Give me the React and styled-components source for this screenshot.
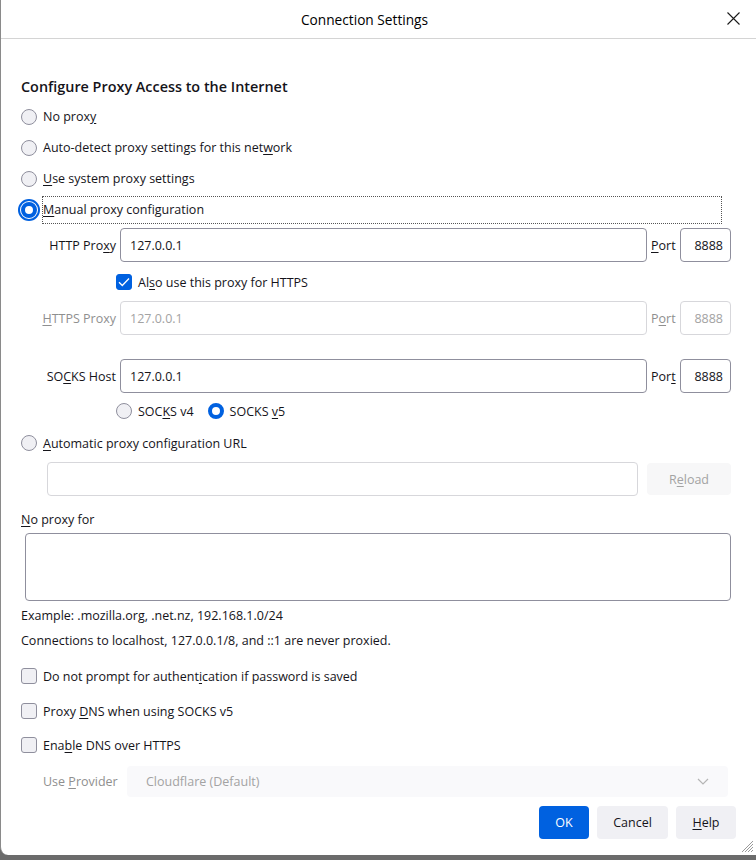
import React from "react";
import styled, { createGlobalStyle } from "styled-components";

const GlobalStyle = createGlobalStyle`
  html, body { margin: 0; padding: 0; background: #6b6b6b; }
  body { font-family: "Open Sans", "Noto Sans", sans-serif; color: #15141a; }
  #root { height: 860px; }
`;

const Window = styled.div`
  position: relative;
  box-sizing: border-box;
  width: 756px;
  height: 855px;
  background: #fff;
  border-left: 1px solid #8a8a8a;
  border-bottom-left-radius: 8px;
  display: flex;
  flex-direction: column;
  overflow: hidden;
`;

const TitleBar = styled.div`
  height: 38px;
  flex-shrink: 0;
  border-bottom: 1px solid #d4d4d4;
  display: flex;
  align-items: center;
  justify-content: center;
  padding-right: 28px;
  font-size: 13.7px;
  color: #000;
`;

const CloseButton = styled.span`
  position: absolute;
  right: 16px;
  top: 12px;
  width: 13px;
  height: 13px;
  display: flex;
`;

const Content = styled.div`
  display: flex;
  flex-direction: column;
  padding: 0 25px 0 20px;
`;

const Heading = styled.div`
  margin-top: 37px;
  height: 22px;
  line-height: 22px;
  font-size: 14.4px;
  font-weight: 600;
`;

const Row = styled.div`
  display: flex;
  align-items: center;
  height: ${(p) => p.$h}px;
  margin-top: ${(p) => p.$mt || 0}px;
  padding-left: ${(p) => p.$indent || 0}px;
  gap: ${(p) => (p.$gap != null ? p.$gap : 0)}px;
  font-size: 12.5px;
`;

const Radio = styled.span`
  flex-shrink: 0;
  box-sizing: border-box;
  width: 16px;
  height: 16px;
  border-radius: 50%;
  border: ${(p) => (p.$checked ? "4px solid #0061e0" : "1px solid #8f8f9d")};
  background: ${(p) => (p.$checked ? "#fff" : "#f0f0f4")};
  ${(p) => p.$focus && "outline: 2px solid #0061e0; outline-offset: 1px;"}
`;

const Check = styled.span`
  flex-shrink: 0;
  box-sizing: border-box;
  width: 16px;
  height: 16px;
  border-radius: 3px;
  border: 1px solid ${(p) => (p.$checked ? "#0061e0" : "#8f8f9d")};
  background: ${(p) => (p.$checked ? "#0061e0" : "#f0f0f4")};
  display: flex;
  align-items: center;
  justify-content: center;
`;

const ChoiceLabel = styled.span`
  margin-left: 6px;
  white-space: nowrap;
  color: ${(p) => (p.$disabled ? "#8f8f8f" : "#15141a")};
  ${(p) =>
    p.$focus &&
    `flex: 0 0 680px; box-sizing: border-box; height: 28px; display: flex; align-items: center;
     margin-left: 5px; border: 1px dotted #555;`}
`;

const FieldLabel = styled.span`
  width: ${(p) => p.$w}px;
  flex-shrink: 0;
  text-align: ${(p) => p.$align || "right"};
  white-space: nowrap;
  color: ${(p) => (p.$disabled ? "#8f8f8f" : "#15141a")};
`;

const TextBox = styled.div`
  box-sizing: border-box;
  height: 100%;
  flex: ${(p) => (p.$w ? `0 0 ${p.$w}px` : "1 1 auto")};
  border: 1px solid ${(p) => (p.$disabled ? "#d7d7db" : "#8f8f9d")};
  border-radius: 4px;
  display: flex;
  align-items: center;
  justify-content: ${(p) => (p.$right ? "flex-end" : "flex-start")};
  padding: 0 ${(p) => (p.$right ? 7 : 0)}px 0 ${(p) => (p.$right ? 0 : 9)}px;
  color: ${(p) => (p.$disabled ? "#a3a3a3" : "#15141a")};
  font-size: 12.5px;
`;

const U = styled.span`
  text-decoration: underline;
  text-underline-offset: 2px;
`;

const Para = styled.div`
  height: 20px;
  margin-top: ${(p) => p.$mt || 0}px;
  line-height: 20px;
  font-size: 12.5px;
  white-space: nowrap;
`;

const TextArea = styled.div`
  box-sizing: border-box;
  margin: 3px 0 0 4px;
  height: 68px;
  border: 1px solid #8f8f9d;
  border-radius: 4px;
`;

const FlatButton = styled.span`
  box-sizing: border-box;
  height: ${(p) => p.$h || 32}px;
  width: ${(p) => p.$w}px;
  flex-shrink: 0;
  border-radius: 4px;
  display: flex;
  align-items: center;
  justify-content: center;
  font-size: 12.5px;
  background: ${(p) =>
    p.$primary ? "#0061e0" : p.$disabled ? "#f7f7f8" : "#f0f0f4"};
  color: ${(p) => (p.$primary ? "#fff" : p.$disabled ? "#a3a3a3" : "#15141a")};
`;

const Select = styled.div`
  box-sizing: border-box;
  height: 31px;
  width: 601px;
  margin-left: 8px;
  border-radius: 4px;
  background: #f9f9fb;
  display: flex;
  align-items: center;
  justify-content: space-between;
  padding: 0 19px 0 19px;
  color: #a3a3a3;
  font-size: 12.5px;
`;

const ButtonBar = styled.div`
  display: flex;
  justify-content: flex-end;
  gap: 8px;
  margin-top: 9px;
  margin-right: -5px;
`;

const Grip = styled.svg`
  position: absolute;
  right: 2px;
  bottom: 2px;
`;

const CheckMark = () => (
  <svg width="12" height="10" viewBox="0 0 12 10">
    <path d="M1 5.2 L4.3 8.5 L11 1.5" fill="none" stroke="#fff" strokeWidth="1.3" />
  </svg>
);

const Chevron = () => (
  <svg width="12" height="7" viewBox="0 0 12 7">
    <path d="M1 1 L6 6 L11 1" fill="none" stroke="#b5b5b5" strokeWidth="1.2" />
  </svg>
);

const RadioRow = ({ h = 31, mt, indent, checked, focus, children }) => (
  <Row $h={h} $mt={mt} $indent={indent}>
    <Radio $checked={checked} $focus={focus} />
    <ChoiceLabel $focus={focus}>{children}</ChoiceLabel>
  </Row>
);

const CheckRow = ({ mt, indent, checked, children }) => (
  <Row $h={30} $mt={mt} $indent={indent}>
    <Check $checked={checked}>{checked && <CheckMark />}</Check>
    <ChoiceLabel>{children}</ChoiceLabel>
  </Row>
);

const ProxyRow = ({ mt, label, port, disabled }) => (
  <Row $h={34} $mt={mt}>
    <FieldLabel $w={95} $disabled={disabled}>{label}</FieldLabel>
    <TextBox $disabled={disabled} style={{ marginLeft: 4 }}>127.0.0.1</TextBox>
    <FieldLabel $w={29} $align="left" $disabled={disabled} style={{ marginLeft: 4 }}>
      {port}
    </FieldLabel>
    <TextBox $w={51} $right $disabled={disabled}>8888</TextBox>
  </Row>
);

export default function App() {
  return (
    <>
      <GlobalStyle />
      <Window>
        <TitleBar>Connection Settings</TitleBar>
        <CloseButton>
          <svg width="13" height="13" viewBox="0 0 13 13">
            <path d="M0.5 0.5 L12.5 12.5 M12.5 0.5 L0.5 12.5" stroke="#1a1a1a" strokeWidth="1.1" />
          </svg>
        </CloseButton>
        <Content>
          <Heading>Configure Proxy Access to the Internet</Heading>
          <RadioRow mt={3}>
            No prox<U>y</U>
          </RadioRow>
          <RadioRow>
            Auto-detect proxy settings for this net<U>w</U>ork
          </RadioRow>
          <RadioRow>
            <U>U</U>se system proxy settings
          </RadioRow>
          <RadioRow checked focus>
            <U>M</U>anual proxy configuration
          </RadioRow>
          <ProxyRow
            mt={3}
            label={<>HTTP Pro<U>x</U>y</>}
            port={<><U>P</U>ort</>}
          />
          <CheckRow mt={5} indent={95} checked>
            Al<U>s</U>o use this proxy for HTTPS
          </CheckRow>
          <ProxyRow
            mt={4}
            disabled
            label={<><U>H</U>TTPS Proxy</>}
            port={<>P<U>o</U>rt</>}
          />
          <ProxyRow
            mt={24}
            label={<>SO<U>C</U>KS Host</>}
            port={<>Por<U>t</U></>}
          />
          <Row $h={30} $mt={3} $indent={95}>
            <Radio />
            <ChoiceLabel>
              SOC<U>K</U>S v4
            </ChoiceLabel>
            <Radio $checked style={{ marginLeft: 14 }} />
            <ChoiceLabel>
              SOCKS <U>v</U>5
            </ChoiceLabel>
          </Row>
          <RadioRow h={30} mt={2}>
            <U>A</U>utomatic proxy configuration URL
          </RadioRow>
          <Row $h={34} $mt={4} $indent={26} $gap={9}>
            <TextBox $disabled />
            <FlatButton $w={84} $disabled>
              R<U>e</U>load
            </FlatButton>
          </Row>
          <Para $mt={14}>
            <U>N</U>o proxy for
          </Para>
          <TextArea />
          <Para $mt={5}>Example: .mozilla.org, .net.nz, 192.168.1.0/24</Para>
          <Para $mt={5}>Connections to localhost, 127.0.0.1/8, and ::1 are never proxied.</Para>
          <CheckRow mt={10}>
            Do not prompt for authent<U>i</U>cation if password is saved
          </CheckRow>
          <CheckRow mt={5}>
            Proxy <U>D</U>NS when using SOCKS v5
          </CheckRow>
          <CheckRow mt={4}>
            Ena<U>b</U>le DNS over HTTPS
          </CheckRow>
          <Row $h={31} $mt={6} $indent={22}>
            <FieldLabel $w={76} $align="left" $disabled>
              Use <U>P</U>rovider
            </FieldLabel>
            <Select>
              <span>Cloudflare (Default)</span>
              <Chevron />
            </Select>
          </Row>
          <ButtonBar>
            <FlatButton $w={50} $h={33} $primary>OK</FlatButton>
            <FlatButton $w={71} $h={33}>Cancel</FlatButton>
            <FlatButton $w={60} $h={33}>
              <U>H</U>elp
            </FlatButton>
          </ButtonBar>
        </Content>
        <Grip width="12" height="12" viewBox="0 0 12 12">
          <path d="M11 3 L3 11 M11 6 L6 11 M11 9 L9 11 M11 0 L0 11" stroke="#9a9a9a" strokeWidth="1" />
        </Grip>
      </Window>
    </>
  );
}
